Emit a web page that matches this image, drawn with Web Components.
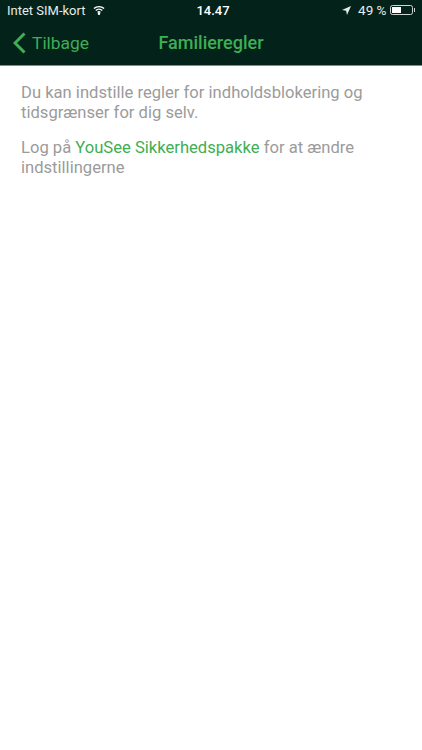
<!DOCTYPE html>
<html lang="da">
<head>
<meta charset="utf-8">
<title>Familieregler</title>
<style>
html, body { margin: 0; padding: 0; background: #fff; }
body { font-family: Roboto, "Liberation Sans", sans-serif; }
</style>
</head>
<body>
<app-header title-text="Familieregler" back-text="Tilbage"></app-header>
<info-text>
  <p>Du kan indstille regler for indholdsblokering og tidsgrænser for dig selv.</p>
  <p><span>Log på </span><green-link>YouSee Sikkerhedspakke</green-link><span> for at ændre</span> <span>indstillingerne</span></p>
</info-text>

<script>
class StatusBar extends HTMLElement {
  constructor() {
    super();
    this.attachShadow({ mode: "open" });
    this.shadowRoot.innerHTML = `
<style>
:host { display: grid; grid-template-columns: 1fr auto 1fr; align-items: center; height: 20px; padding: 0 7px; color: #e6ece9; font-size: 13px; }
.left, .right { display: flex; align-items: center; }
.left { gap: 7px; }
.right { justify-content: flex-end; gap: 5px; }
.time { color: #fff; font-weight: 500; font-size: 13px; margin-left: 4px; }
.pct { font-size: 13.5px; margin-left: 2px; }
.batt { display: flex; align-items: center; margin-left: -2px; }
.shell { width: 23px; height: 10px; border: 1px solid #cfd6d3; border-radius: 2.5px; padding: 1px; box-sizing: border-box; }
.fill { width: 50%; height: 100%; background: #fff; }
.nub { width: 1.5px; height: 4px; background: #cfd6d3; margin-left: 1px; }
</style>
<div class="left">
  <span>Intet SIM-kort</span>
  <svg width="12" height="10" viewBox="0 0 13 10" fill="none" stroke="#fff" stroke-width="1.5">
    <path d="M1 3.500a8 8 0 0 1 11 0"/><path d="M3 5.600a5 5 0 0 1 7 0"/><path d="M5 7.600a2.200 2.200 0 0 1 3 0"/>
    <circle cx="6.500" cy="9" r=".6" fill="#fff"/>
  </svg>
</div>
<span class="time">14.47</span>
<div class="right">
  <svg width="9" height="9" viewBox="0 0 9 9"><path d="M9 0 0 3.900l4.100.9.900 4.200z" fill="#e6ece9"/></svg>
  <span class="pct">49 %</span>
  <span class="batt"><span class="shell"><div class="fill"></div></span><span class="nub"></span></span>
</div>`;
  }
}

class AppHeader extends HTMLElement {
  constructor() {
    super();
    this.attachShadow({ mode: "open" });
    this.shadowRoot.innerHTML = `
<style>
:host { display: block; background: #03231a; border-bottom: 1px solid #7d9089; }
.nav { display: grid; grid-template-columns: 1fr auto 1fr; align-items: center; height: 45px; padding: 0 13px; color: #3fae54; }
.back { display: flex; align-items: center; gap: 6px; font-size: 17.4px; }
.title { font-size: 18px; font-weight: 500; }
</style>
<status-bar></status-bar>
<div class="nav">
  <div class="back">
    <svg width="13" height="22" viewBox="0 0 13 22" fill="none" stroke="#3fae54" stroke-width="3"><path d="M11.500 1.500 2 11l9.500 9.500"/></svg>
    <span id="back"></span>
  </div>
  <span class="title" id="title"></span>
  <span></span>
</div>`;
  }
  connectedCallback() {
    this.shadowRoot.querySelector("#back").textContent = this.getAttribute("back-text");
    this.shadowRoot.querySelector("#title").textContent = this.getAttribute("title-text");
  }
}

class InfoText extends HTMLElement {
  constructor() {
    super();
    this.attachShadow({ mode: "open" });
    this.shadowRoot.innerHTML = `
<style>
:host { display: block; padding: 17px 21px; color: #9b9b9b; font-size: 16.6px; line-height: 20px; }
::slotted(p) { margin: 0 0 15px; }
</style>
<slot></slot>`;
  }
}

class GreenLink extends HTMLElement {
  constructor() {
    super();
    this.attachShadow({ mode: "open" });
    this.shadowRoot.innerHTML = `
<style>
:host { display: inline; color: #3fae54; cursor: pointer; }
</style>
<slot></slot>`;
  }
}

customElements.define("status-bar", StatusBar);
customElements.define("app-header", AppHeader);
customElements.define("info-text", InfoText);
customElements.define("green-link", GreenLink);
</script>
</body>
</html>
